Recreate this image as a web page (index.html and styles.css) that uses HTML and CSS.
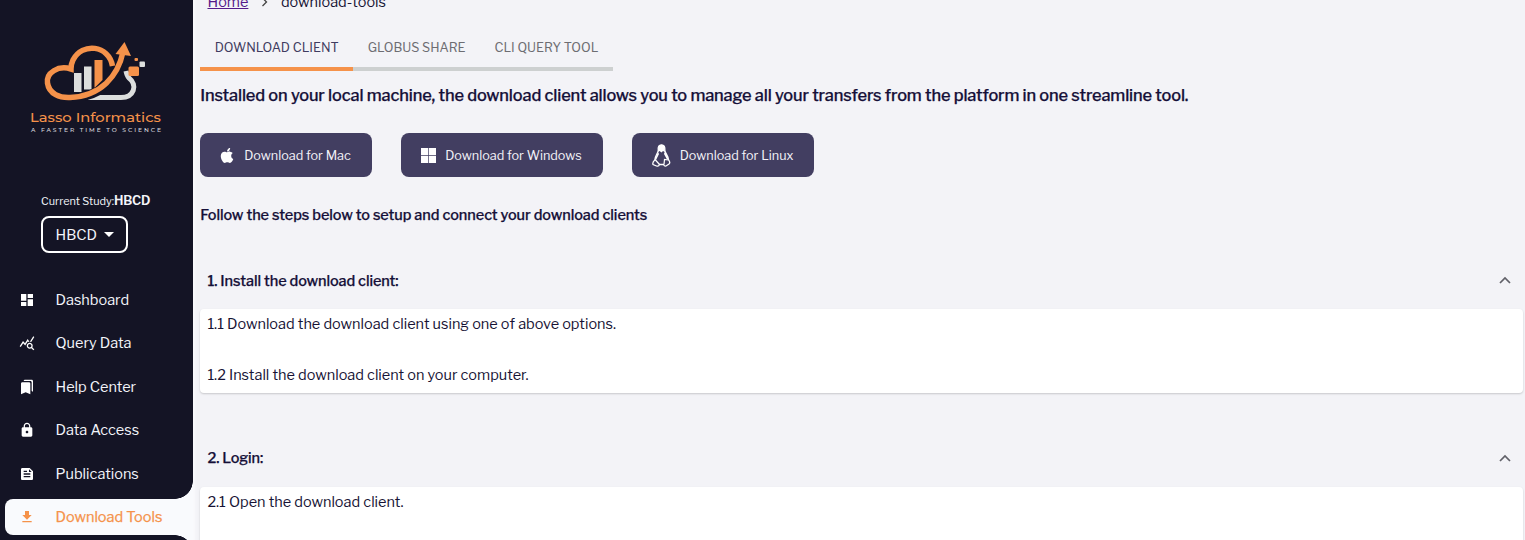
FILE: index.html
```html
<!DOCTYPE html>
<html lang="en">
<head>
<meta charset="utf-8">
<title>Download Tools</title>
<link rel="stylesheet" href="styles.css">
</head>
<body>
<div class="app">
  <aside class="sidebar">
    <svg class="logo" width="140" height="100" viewBox="25 38 140 100">
      <path d="M88 97.500H121C134 97.500 138 85 129 78Q127 76 126 71" fill="none" stroke="#dcdedd" stroke-width="5"/>
      <rect x="74" y="73" width="7.500" height="19" fill="#dcdedd"/>
      <rect x="84" y="66.500" width="7.500" height="23" fill="#dcdedd"/>
      <path d="M94.500 60h8v20l-8 8z" fill="#f5924a"/>
      <path d="M85 96C104 92 118 76 123.500 52" fill="none" stroke="#141425" stroke-width="9"/>
      <path d="M112.500 66C109 45 82 42 73 60Q71 64 71 69C58 65 46 73 47.500 83C49 94 60 98 70 97.500C101 96 118 76 123 52" fill="none" stroke="#f5924a" stroke-width="5.500"/>
      <path d="M124.500 42L131 56L115.500 54z" fill="#f5924a"/>
      <rect x="128.500" y="66.500" width="10.500" height="9.500" rx="1.500" fill="#f5924a"/>
      <rect x="139.500" y="61.500" width="5.500" height="5.500" rx="1" fill="#dcdedd"/>
      <rect x="134.500" y="58" width="3.500" height="3" rx="1" fill="#f5924a"/>
      <text x="30" y="121.500" class="logo-name" textLength="131" lengthAdjust="spacingAndGlyphs">Lasso Informatics</text>
      <text x="31" y="131.800" class="logo-tag" textLength="130" lengthAdjust="spacing">A FASTER TIME TO SCIENCE</text>
    </svg>
    <div class="study"><span>Current Study:</span><b class="study-name">HBCD</b></div>
    <div class="select"><span>HBCD</span><i class="caret"></i></div>
    <nav class="nav">
      <a class="item"><svg class="icon" viewBox="0 0 24 24"><path d="M3 13h8V3H3v10zm0 8h8v-6H3v6zm10 0h8V11h-8v10zm0-18v6h8V3h-8z"/></svg><span>Dashboard</span></a>
      <a class="item"><svg class="icon" viewBox="0 0 24 24"><path d="M19.880 18.470c.440-.700.700-1.510.700-2.390 0-2.490-2.010-4.500-4.500-4.500s-4.500 2.010-4.500 4.500 2.010 4.500 4.490 4.500c.880 0 1.700-.260 2.390-.700L21.580 23 23 21.580l-3.120-3.110zm-3.800.110c-1.380 0-2.500-1.120-2.500-2.500s1.120-2.500 2.500-2.500 2.500 1.120 2.500 2.500-1.120 2.500-2.500 2.500zm-.360-8.500c-.740.020-1.450.180-2.100.450l-.550-.830-3.800 6.180-3.010-3.520-3.630 5.810L1 17l5-8 3 3.500L13 6l2.720 4.080zm2.590.500c-.640-.280-1.330-.450-2.050-.490L21.380 2 23 3.180l-4.690 7.400z"/></svg><span>Query Data</span></a>
      <a class="item"><svg class="icon" viewBox="0 0 24 24"><path d="M19 18l2 1V3c0-1.100-.900-2-2-2H8.990C7.890 1 7 1.900 7 3h10c1.100 0 2 .900 2 2v13zM15 5H5c-1.100 0-2 .900-2 2v16l7-3 7 3V7c0-1.100-.900-2-2-2z"/></svg><span>Help Center</span></a>
      <a class="item"><svg class="icon" viewBox="0 0 24 24"><path d="M18 8h-1V6c0-2.760-2.240-5-5-5S7 3.240 7 6v2H6c-1.100 0-2 .900-2 2v10c0 1.100.900 2 2 2h12c1.100 0 2-.900 2-2V10c0-1.100-.900-2-2-2zm-6 9c-1.100 0-2-.900-2-2s.900-2 2-2 2 .900 2 2-.900 2-2 2zm3.100-9H8.900V6c0-1.710 1.390-3.100 3.100-3.100s3.100 1.390 3.100 3.100v2z"/></svg><span>Data Access</span></a>
      <a class="item"><svg class="icon" viewBox="0 0 24 24"><path d="M16 3H5c-1.100 0-2 .900-2 2v14c0 1.100.900 2 2 2h14c1.100 0 2-.900 2-2V8l-5-5zM7 7h5v2H7V7zm10 10H7v-2h10v2zm0-4H7v-2h10v2zm-2-4V5l4 4h-4z"/></svg><span>Publications</span></a>
      <a class="item active"><svg class="icon" viewBox="0 0 24 24"><path d="M19 9h-4V3H9v6H5l7 7 7-7zM5 18v2h14v-2H5z"/></svg><span>Download Tools</span></a>
    </nav>
  </aside>
  <main class="main">
    <div class="crumbs"><a class="home">Home</a><svg class="crumb-sep" width="8" height="10" viewBox="0 0 8 10"><path d="M1.500 1L5.500 5L1.500 9" fill="none" stroke="#444" stroke-width="1.300"/></svg><span>download-tools</span></div>
    <div class="tabs">
      <div class="tab selected">DOWNLOAD CLIENT</div>
      <div class="tab">GLOBUS SHARE</div>
      <div class="tab">CLI QUERY TOOL</div>
    </div>
    <h1 class="headline">Installed on your local machine, the download client allows you to manage all your transfers from the platform in one streamline tool.</h1>
    <div class="buttons">
      <a class="button mac"><svg width="14" height="17" viewBox="0 0 384 512"><path d="M318.700 268.700c-.200-36.700 16.400-64.400 50-84.800-18.800-26.900-47.200-41.700-84.700-44.600-35.500-2.800-74.300 20.700-88.500 20.700-15 0-49.400-19.700-76.400-19.700C63.300 141.200 4 184.800 4 273.500q0 39.300 14.400 81.200c12.800 36.700 59 126.700 107.200 125.200 25.200-.600 43-17.900 75.800-17.900 31.800 0 48.300 17.900 76.400 17.900 48.600-.700 90.400-82.500 102.600-119.300-65.200-30.700-61.700-90-61.700-91.900zm-56.600-164.200c27.300-32.400 24.800-61.900 24-72.500-24.100 1.400-52 16.400-67.900 34.900-17.500 19.800-27.800 44.300-25.600 71.900 26.100 2 49.900-11.400 69.500-34.300z" fill="#fff"/></svg><span>Download for Mac</span></a>
      <a class="button windows"><svg width="15" height="15" viewBox="0 0 15 15"><path d="M0 0h7.200v7.200H0zM7.900 0H15v7.200H7.900zM0 7.900h7.200V15H0zM7.900 7.900H15V15H7.900z" fill="#fff"/></svg><span>Download for Windows</span></a>
      <a class="button linux"><svg width="19" height="23" viewBox="0 0 19 23"><path d="M6.300 6C5.800 3 7 1 9.500 1S13.200 3 12.800 6c0 3 3.200 5 3.600 9.500C17.500 17 18.800 18.500 17 20l-3 2c-1.500.500-2-.500-2.500-1.500H7.500C7 22 6 22.500 4.500 22L1 20.500C.500 19 1 17.500 2.800 16 3 11.500 6 9.500 6.300 6z" fill="none" stroke="#fff" stroke-width="1.300"/><path d="M6.200 2Q9.500-.500 12.800 2V8l-1.800-1-1.500 1.500L7.500 7 6 8zM6 8l-3 7 1 1 3-6zM13 7l3.500 8-1.500.500L12 10z" fill="#fff"/><path d="M3 15.500L7.500 20.500M16.500 16L12.500 15.500 12 20.500" fill="none" stroke="#fff" stroke-width="1.200"/></svg><span>Download for Linux</span></a>
    </div>
    <h2 class="follow">Follow the steps below to setup and connect your download clients</h2>
    <section class="step">
      <header class="step-head"><span>1. Install the download client:</span><svg class="chev" width="12" height="8" viewBox="0 0 12 8"><path d="M1 7L6 2L11 7" /></svg></header>
      <div class="card"><p>1.1 Download the download client using one of above options.</p><p>1.2 Install the download client on your computer.</p></div>
    </section>
    <section class="step">
      <header class="step-head"><span>2. Login:</span><svg class="chev" width="12" height="8" viewBox="0 0 12 8"><path d="M1 7L6 2L11 7" /></svg></header>
      <div class="card"><p>2.1 Open the download client.</p></div>
    </section>
  </main>
</div>
</body>
</html>
```
FILE: styles.css
```css
* { box-sizing: border-box; }
body { margin: 0; background: #f3f3f7; color: #171335; font: 14.5px/20px "Libre Franklin", Inter, sans-serif; }
.app { display: flex; height: 540px; overflow: hidden; }
span, b, .home, .tab, .headline { white-space: nowrap; }
.sidebar { width: 193px; flex: none; background: #141425; color: #f3f4fa; height: 540px; overflow: hidden; }
.logo { display: block; margin: 38px 0 0 25px; }
.logo-name { font: 500 12.500px Montserrat, Inter, sans-serif; fill: #f5924a; }
.logo-tag { font: 500 6px Montserrat, Inter, sans-serif; fill: #d9d9de; }
.study { display: flex; align-items: center; height: 20px; margin: 53px 0 0 41px; font-size: 10.900px; }
.study-name { font-size: 12.700px; font-weight: 600; letter-spacing: -.2px; }
.select { display: flex; align-items: center; gap: 7px; width: 87px; height: 37px; margin: 5px 0 0 40.5px; padding-left: 13px; border: 2px solid #fff; border-radius: 8px; }
.caret { border: 5px solid transparent; border-top-color: #fff; border-bottom: 0; }
.nav { margin: 29px 0 0 5px; display: flex; flex-direction: column; gap: 7.400px; }
.item { display: flex; align-items: center; height: 36px; padding-left: 13.5px; gap: 21px; position: relative; }
.icon { width: 16px; height: 16px; fill: #fff; }
.active { background: #f9fafd; color: #f5924a; border-radius: 8px 0 0 8px; -webkit-text-stroke: .25px #f5924a; }
.active .icon { fill: #f5924a; }
.active::before, .active::after { content: ""; position: absolute; right: 0; width: 18px; height: 18px; }
.active::before { top: -18px; background: radial-gradient(circle at 0 0, #141425 17.5px, #f9fafd 18px); }
.active::after { bottom: -18px; background: radial-gradient(circle at 0 100%, #141425 17.5px, #f9fafd 18px); }
.main { flex: 1; padding: 0 2px 0 7.200px; min-width: 0; box-shadow: inset 4px 0 3px -2px #fafafd; }
.crumbs { display: flex; align-items: center; margin: -8px 0 0 7.3px; height: 20px; }
.home { color: #551a8b; text-decoration: underline; }
.crumb-sep { margin: 0 12px 0 12.500px; }
.tabs { display: flex; width: 413px; height: 59px; border-bottom: 4px solid #cdd0d0; }
.tab { height: 59px; padding: 26px 14.5px 0; font-size: 12.670px; color: #6d6d72; }
.selected { color: #3f3c60; border-bottom: 4px solid #f5924a; }
.headline { margin: 15px 0 0; font-size: 16.400px; line-height: 19px; font-weight: 500; letter-spacing: -.125px; color: #150f38; -webkit-text-stroke: .25px #150f38; }
.buttons { display: flex; gap: 29px; margin-top: 28.300px; }
.button { display: flex; align-items: center; height: 44px; border-radius: 8px; background: #423e61; color: #f3f2f8; font-size: 12.670px; padding-left: 20px; }
.button span { padding-top: 1px; }
.mac { width: 172px; gap: 10px; }
.windows { width: 202px; gap: 9px; }
.linux { width: 182px; gap: 8.500px; }
.follow { margin: 27.700px 0 0; font-size: 14.5px; line-height: 20px; font-weight: 500; letter-spacing: -.061px; color: #150f38; -webkit-text-stroke: .25px #150f38; }
.step { margin-bottom: 36px; }
.follow + .step { margin-top: 26.500px; }
.step-head { display: flex; align-items: center; justify-content: space-between; height: 58px; padding: 0 12px 0 7.200px; font-weight: 500; letter-spacing: -.08px; color: #150f38; -webkit-text-stroke: .25px #150f38; }
.step-head span { padding-top: 1px; }
.chev path { fill: none; stroke: #606068; stroke-width: 1.700; }
.card { height: 83.5px; background: #fff; border-radius: 4px; padding: 5px 7.200px; box-shadow: 0 1px 2px rgba(0,0,0,.18); }
.card p { margin: 0; height: 50.5px; }
```
